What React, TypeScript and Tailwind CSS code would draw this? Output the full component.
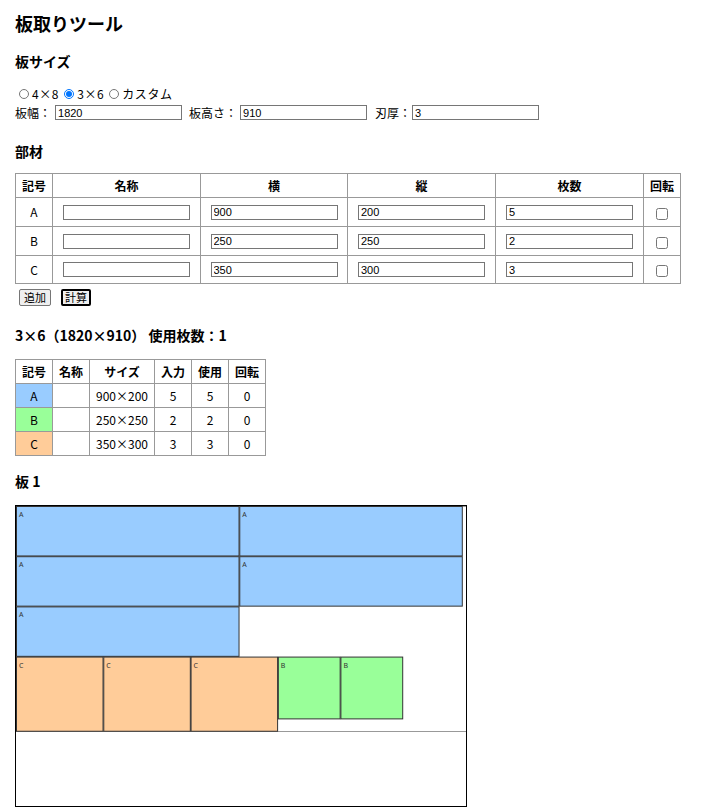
import React from "react";

const S = 450 / 1820;

const colors: Record<string, string> = {
  A: "#99ccff",
  B: "#99ff99",
  C: "#ffcc99",
};

const parts = [
  { id: "A", w: 900, h: 200, count: 5 },
  { id: "B", w: 250, h: 250, count: 2 },
  { id: "C", w: 350, h: 300, count: 3 },
];

const placed = [
  { id: "A", x: 0, y: 0, w: 900, h: 200 },
  { id: "A", x: 903, y: 0, w: 900, h: 200 },
  { id: "A", x: 0, y: 203, w: 900, h: 200 },
  { id: "A", x: 903, y: 203, w: 900, h: 200 },
  { id: "A", x: 0, y: 406, w: 900, h: 200 },
  { id: "C", x: 0, y: 609, w: 350, h: 300 },
  { id: "C", x: 353, y: 609, w: 350, h: 300 },
  { id: "C", x: 706, y: 609, w: 350, h: 300 },
  { id: "B", x: 1059, y: 609, w: 250, h: 250 },
  { id: "B", x: 1312, y: 609, w: 250, h: 250 },
];

const inputCls =
  "w-[127px] h-[15px] border border-[#767676] px-[2px] text-[11px] leading-[13px] bg-white outline-none";

const th = "border border-[#999] font-bold text-center";
const td = "border border-[#999] text-center";
const mono = { fontFamily: '"Liberation Sans", sans-serif' };

export default function App() {
  return (
    <div
      className="px-[15px] pt-[10px] pb-[10px] text-[12px] text-black bg-white"
      style={{ fontFamily: '"Noto Sans CJK JP", "Noto Sans", sans-serif' }}
    >
      <h1 className="text-[18px] font-bold leading-[26px]">板取りツール</h1>

      <h2 className="mt-[15px] text-[14px] font-bold leading-[20px]">板サイズ</h2>

      <div className="mt-[13px] flex items-center h-[19px] tracking-[0.6px]">
        <input type="radio" name="size" className="w-[10px] h-[10px] m-0 ml-[4px] mr-[3px]" />
        <span>4×8</span>
        <input type="radio" name="size" defaultChecked className="w-[10px] h-[10px] m-0 ml-[5px] mr-[3px]" />
        <span>3×6</span>
        <input type="radio" name="size" className="w-[10px] h-[10px] m-0 ml-[5px] mr-[3px]" />
        <span>カスタム</span>
      </div>

      <div className="flex items-center h-[19px]">
        <span>板幅：</span>
        <input className={`${inputCls} ml-[4px]`} defaultValue="1820" style={mono} />
        <span className="ml-[7px]">板高さ：</span>
        <input className={`${inputCls} ml-[3px]`} defaultValue="910" style={mono} />
        <span className="ml-[8px]">刃厚：</span>
        <input className={`${inputCls} ml-[1px]`} defaultValue="3" style={mono} />
      </div>

      <h2 className="mt-[19px] text-[14px] font-bold leading-[20px]">部材</h2>

      <table className="mt-[12px] border-collapse">
        <thead>
          <tr className="h-[24px]">
            <th className={`${th} w-[37px]`}>記号</th>
            <th className={`${th} w-[148px]`}>名称</th>
            <th className={`${th} w-[147px]`}>横</th>
            <th className={`${th} w-[148px]`}>縦</th>
            <th className={`${th} w-[148px]`}>枚数</th>
            <th className={`${th} w-[37px]`}>回転</th>
          </tr>
        </thead>
        <tbody>
          {parts.map((p, idx) => (
            <tr key={p.id} className={idx === 2 ? "h-[28px]" : "h-[29px]"}>
              <td className={td}>{p.id}</td>
              {["", String(p.w), String(p.h), String(p.count)].map((v, i) => (
                <td key={i} className={td}>
                  <input className={`${inputCls} block mx-auto`} defaultValue={v} style={mono} />
                </td>
              ))}
              <td className={td}>
                <input type="checkbox" className="w-[12px] h-[12px] m-0 align-middle" />
              </td>
            </tr>
          ))}
        </tbody>
      </table>

      <div className="mt-[5px] flex gap-[10px] ml-[4px]">
        <button className="h-[17px] px-[4px] text-[11px] leading-[15px] border border-[#767676] bg-[#efefef] rounded-[2px]">
          追加
        </button>
        <button className="h-[17px] px-[2px] text-[11px] leading-[13px] border-2 border-black bg-[#efefef] rounded-[2px]">
          計算
        </button>
      </div>

      <h2 className="mt-[19px] text-[14px] font-bold leading-[20px]">3×6（1820×910） 使用枚数：1</h2>

      <table className="mt-[14px] border-collapse">
        <thead>
          <tr className="h-[24px]">
            <th className={`${th} w-[37px]`}>記号</th>
            <th className={`${th} w-[37px]`}>名称</th>
            <th className={`${th} w-[65px]`}>サイズ</th>
            <th className={`${th} w-[37px]`}>入力</th>
            <th className={`${th} w-[37px]`}>使用</th>
            <th className={`${th} w-[37px]`}>回転</th>
          </tr>
        </thead>
        <tbody>
          {parts.map((p) => (
            <tr key={p.id} className="h-[24px]">
              <td className={td} style={{ backgroundColor: colors[p.id] }}>
                {p.id}
              </td>
              <td className={td}></td>
              <td className={td}>
                {p.w}×{p.h}
              </td>
              <td className={td}>{p.count}</td>
              <td className={td}>{p.count}</td>
              <td className={td}>0</td>
            </tr>
          ))}
        </tbody>
      </table>

      <h3 className="mt-[15px] text-[14px] font-bold leading-[20px]">板 1</h3>

      <div className="mt-[14px] w-[452px] h-[302px] border border-black">
        <svg width="450" height="300" className="block">
          <rect x={0.5} y={0.5} width={450} height={225} fill="white" stroke="#999" strokeWidth={1} />
          {placed.map((p, i) => (
            <g key={i}>
              <rect
                x={p.x * S + 0.5}
                y={p.y * S + 0.5}
                width={p.w * S}
                height={p.h * S}
                fill={colors[p.id]}
                stroke="#333"
                strokeWidth={1}
              />
              <text
                x={p.x * S + 3}
                y={p.y * S + 11}
                fontSize={7}
                fill="#333"
                fontFamily='"Noto Sans", sans-serif'
              >
                {p.id}
              </text>
            </g>
          ))}
        </svg>
      </div>
    </div>
  );
}
